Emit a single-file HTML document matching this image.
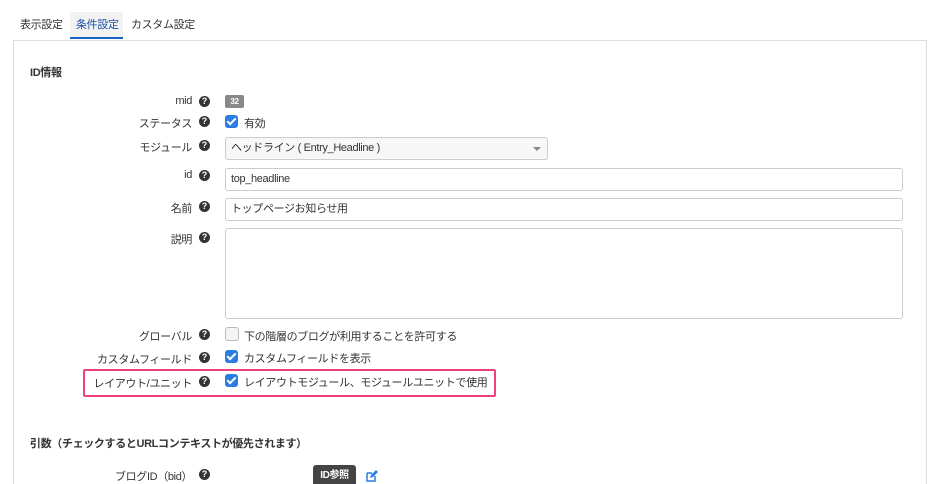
<!DOCTYPE html>
<html><head><meta charset="utf-8"><style>
html,body{margin:0;width:940px;height:484px;overflow:hidden}
body{background:#fff;font-family:"Liberation Sans","Noto Sans CJK JP",sans-serif;font-size:11px;letter-spacing:-0.35px;color:#333;position:relative}
.a{position:absolute;white-space:nowrap}
.tab{top:12px;height:26px;line-height:26px;font-size:11px;padding:0 6px}
.lbl{right:748px;text-align:right}
.q{width:11px;height:11px;border-radius:50%;background:#333;color:#fff;font-size:9px;font-weight:bold;text-align:center;line-height:11px;left:199px;letter-spacing:0}
.cb{width:13px;height:13px;border-radius:3px;background:#2a7de1;left:225px}
.cb:after{content:"";position:absolute;left:4px;top:1px;width:3px;height:7px;border:solid #fff;border-width:0 2px 2px 0;transform:rotate(45deg)}
.in{border:1px solid #ccc;border-radius:3px;background:#fff;box-sizing:border-box;left:225px;padding-left:5px;font-size:11px}
</style></head><body>
<div class="a tab" style="left:14px">表示設定</div>
<div class="a tab" style="left:70px;width:41px;background:#f2f2f2;color:#1a4fa8;border-bottom:2px solid #1a64c8;height:25px">条件設定</div>
<div class="a tab" style="left:125px">カスタム設定</div>
<div class="a" style="left:13px;top:40px;width:912px;height:460px;border:1px solid #ddd"></div>
<div class="a" style="left:30px;top:64px;font-weight:bold">ID情報</div>

<div class="a lbl" style="top:95px">mid</div><div class="a q" style="top:96px">?</div>
<div class="a" style="left:225px;top:95px;width:19px;height:13px;background:#888;border-radius:2px;color:#fff;font-size:8px;font-weight:bold;text-align:center;line-height:13px">32</div>

<div class="a lbl" style="top:115px">ステータス</div><div class="a q" style="top:116px">?</div>
<div class="a cb" style="top:115px"></div><div class="a" style="left:244px;top:115px">有効</div>

<div class="a lbl" style="top:139px">モジュール</div><div class="a q" style="top:140px">?</div>
<div class="a in" style="top:137px;width:323px;height:23px;line-height:21px;background:#f7f7f7">ヘッドライン ( Entry_Headline )</div>
<div class="a" style="left:533px;top:147px;border:4px solid transparent;border-top:4px solid #888;border-bottom:0"></div>

<div class="a lbl" style="top:169px">id</div><div class="a q" style="top:170px">?</div>
<div class="a in" style="top:168px;width:678px;height:23px;line-height:21px">top_headline</div>

<div class="a lbl" style="top:200px">名前</div><div class="a q" style="top:201px">?</div>
<div class="a in" style="top:198px;width:678px;height:23px;line-height:21px">トップページお知らせ用</div>

<div class="a lbl" style="top:231px">説明</div><div class="a q" style="top:232px">?</div>
<div class="a in" style="top:228px;width:678px;height:91px"></div>

<div class="a lbl" style="top:328px">グローバル</div><div class="a q" style="top:329px">?</div>
<div class="a" style="left:225px;top:327px;width:12px;height:12px;border:1px solid #bbb;border-radius:3px;background:#f4f4f4"></div>
<div class="a" style="left:244px;top:328px">下の階層のブログが利用することを許可する</div>

<div class="a lbl" style="top:351px">カスタムフィールド</div><div class="a q" style="top:352px">?</div>
<div class="a cb" style="top:350px"></div><div class="a" style="left:244px;top:350px">カスタムフィールドを表示</div>

<div class="a" style="left:83px;top:369px;width:409px;height:24px;border:2px solid #f0407a;border-radius:2px"></div>
<div class="a lbl" style="top:375px">レイアウト/ユニット</div><div class="a q" style="top:376px">?</div>
<div class="a cb" style="top:374px"></div><div class="a" style="left:244px;top:374px">レイアウトモジュール、モジュールユニットで使用</div>

<div class="a" style="left:30px;top:435px;font-weight:bold">引数（チェックするとURLコンテキストが優先されます）</div>
<div class="a" style="left:115px;top:468px">ブログID（bid）</div><div class="a q" style="top:469px">?</div>
<div class="a" style="left:313px;top:465px;width:43px;height:22px;background:#444;border-radius:3px;color:#fff;font-size:10px;font-weight:bold;text-align:center;line-height:22px">ID参照</div>
<svg class="a" style="left:366px;top:470px" width="12" height="12" viewBox="0 0 12 12"><path d="M1 3h5M1 3v8h8V6" fill="none" stroke="#2a7de1" stroke-width="1.5"/><path d="M4 8l1-3 5-5 2 2-5 5z" fill="#2a7de1"/></svg>
</body></html>
